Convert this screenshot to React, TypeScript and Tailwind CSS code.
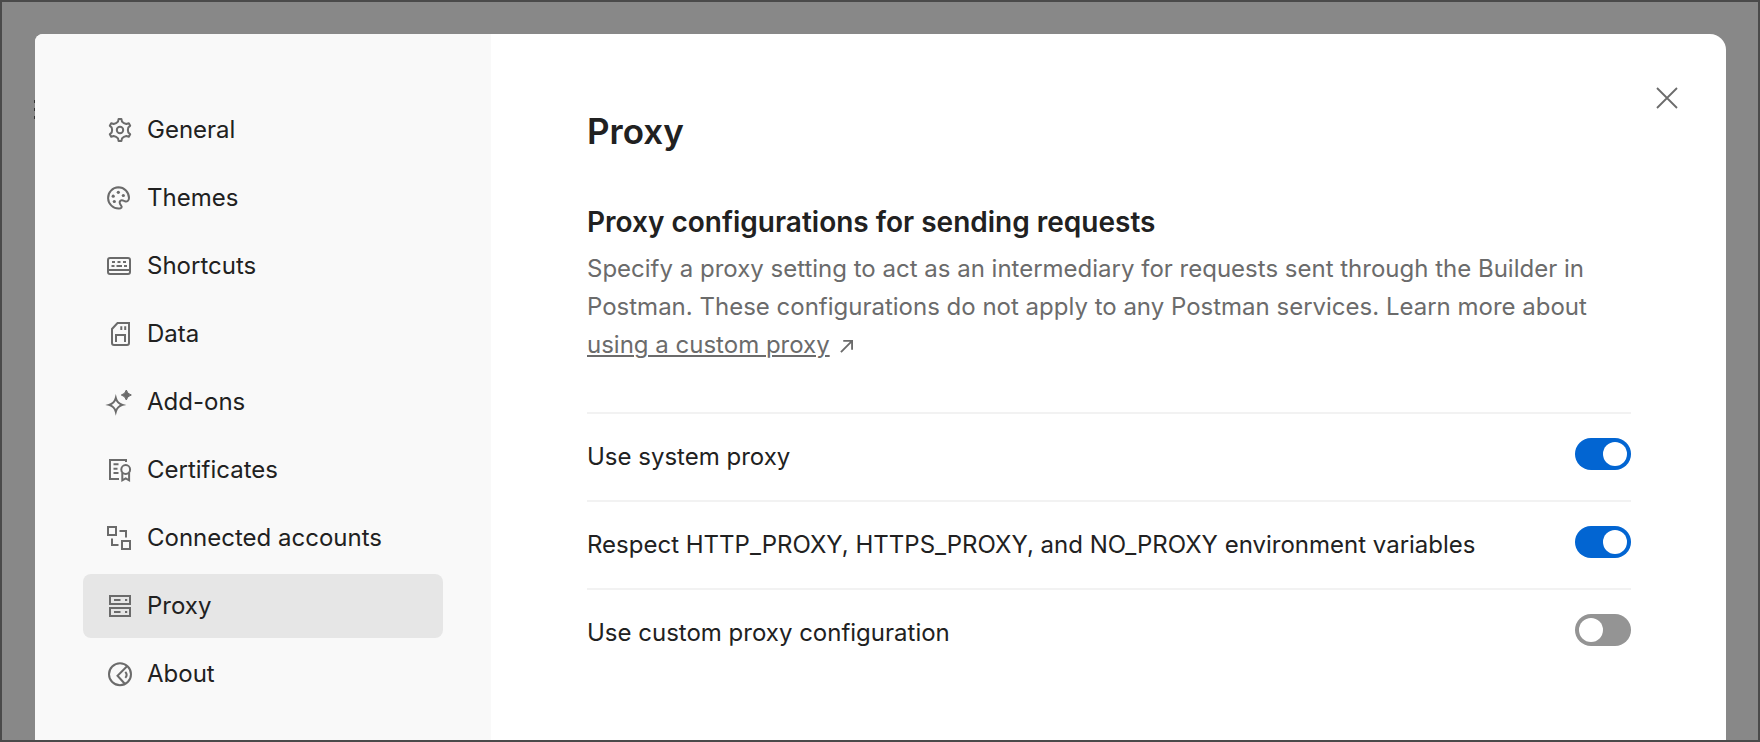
import { useState } from "react";
import type { ReactNode } from "react";

import { clsx } from "clsx";

interface NavItem {
  label: string;
  icon: ReactNode;
}

interface ProxySetting {
  id: string;
  label: string;
  enabled: boolean;
}

const navItems: NavItem[] = [
  {
    label: "General",
    icon: (
      <g transform="translate(13 12)">
        <path
          strokeLinejoin="round"
          d="M-1.4-11H1.4L2-8.4Q3.6-6.6 6.3-6L8.8-6.8L10.2-4.2L8.3-2.4Q7.4 0 8.3 2.4L10.2 4.2L8.8 6.8L6.3 6Q3.6 6.6 2 8.4L1.4 11H-1.4L-2 8.4Q-3.6 6.6-6.3 6L-8.8 6.8L-10.2 4.2L-8.3 2.4Q-7.4 0-8.3-2.4L-10.2-4.2L-8.8-6.8L-6.3-6Q-3.6-6.6-2-8.4Z"
        />
        <circle r="3.2" />
      </g>
    ),
  },
  {
    label: "Themes",
    icon: (
      <>
        <path
          strokeLinejoin="round"
          d="M11.4 1.3a10.6 10.6 0 1 0 .6 21.2c2.4-.1 3.3-1.5 2.3-2.6c-1.6-2-2.2-3.9-.9-5.1c1.4-1.3 2.9-.2 4.5.4c2 .8 4.1-.4 4.1-3.1C22 6.2 17.3 1.3 11.4 1.3z"
        />
        <g fill="currentColor" stroke="none">
          <circle cx="6.2" cy="10.2" r="1.6" />
          <circle cx="11.3" cy="6.3" r="1.6" />
          <circle cx="16.3" cy="9.5" r="1.6" />
          <circle cx="7.3" cy="15.5" r="1.6" />
        </g>
      </>
    ),
  },
  {
    label: "Shortcuts",
    icon: (
      <>
        <rect x="1" y="4" width="22" height="16" rx="2" />
        <path d="M1 16h22M5 8h3M10.5 8h3M16 8h3M4.5 12h3M9.5 12h5.5M17 12h3" />
      </>
    ),
  },
  {
    label: "Data",
    icon: (
      <>
        <path d="M10.5 1H22V21a2 2 0 0 1-2 2H7a2 2 0 0 1-2-2V7z" />
        <path d="M9 20v-7h9V20M14.3 4.3V8M18.2 4.3V8" />
      </>
    ),
  },
  {
    label: "Add-ons",
    icon: (
      <>
        <path d="M8.8 8Q10.2 13.4 15.6 14.9Q10.2 16.4 8.8 21.8Q7.4 16.4 2 14.9Q7.4 13.4 8.8 8z" />
        <path
          d="M19.3 0Q20.3 4 24.3 5Q20.3 6 19.3 10Q18.3 6 14.3 5Q18.3 4 19.3 0z"
          fill="currentColor"
          strokeWidth="1"
          strokeLinejoin="round"
        />
      </>
    ),
  },
  {
    label: "Certificates",
    icon: (
      <>
        <path d="M19 4V2H3v19H12M6.5 6.3h5M6.5 10.7h4M6.5 15h5" />
        <circle cx="18.7" cy="11.5" r="4.4" />
        <path d="M15.3 15v7.3l3.4-2l3.4 2V15" />
      </>
    ),
  },
  {
    label: "Connected accounts",
    icon: (
      <>
        <rect x="1" y="1" width="8" height="8" />
        <rect x="15" y="15" width="8" height="8" />
        <path d="M12.5 5H19v6.5M5 12.5V19h6.5" />
      </>
    ),
  },
  {
    label: "Proxy",
    icon: (
      <>
        <rect x="3" y="2" width="20" height="8" />
        <rect x="3" y="14" width="20" height="8" />
        <path d="M7 6h6.5M18 6h2.2M7 18h6.5M18 18h2.2" />
      </>
    ),
  },
  {
    label: "About",
    icon: (
      <>
        <circle cx="13" cy="12.3" r="11" />
        <path d="M20.3 4L10.5 13.7L18 22M18.3 9.8Q21 12.8 18.3 15.8" />
      </>
    ),
  },
];

const initialSettings: ProxySetting[] = [
  { id: "system-proxy", label: "Use system proxy", enabled: true },
  {
    id: "env-proxy",
    label:
      "Respect HTTP_PROXY, HTTPS_PROXY, and NO_PROXY environment variables",
    enabled: true,
  },
  {
    id: "custom-proxy",
    label: "Use custom proxy configuration",
    enabled: false,
  },
];

function Sidebar({
  active,
  onSelect,
}: {
  active: string;
  onSelect: (label: string) => void;
}) {
  return (
    <nav className="flex w-[456px] shrink-0 flex-col gap-1 bg-[#f9f9f9] px-12 pt-16">
      {navItems.map((item) => (
        <button
          key={item.label}
          type="button"
          onClick={() => onSelect(item.label)}
          className={clsx(
            "flex h-16 items-center gap-4 rounded-lg px-6 text-left",
            active === item.label && "bg-[#e6e6e6]",
          )}
        >
          <svg
            viewBox="0 0 24 24"
            className="size-6 shrink-0 overflow-visible text-[#6b6b6b]"
            fill="none"
            stroke="currentColor"
            strokeWidth="2"
            aria-hidden="true"
          >
            {item.icon}
          </svg>
          {item.label}
        </button>
      ))}
    </nav>
  );
}

function SettingRow({
  setting,
  onToggle,
}: {
  setting: ProxySetting;
  onToggle: () => void;
}) {
  return (
    <div className="flex items-start justify-between gap-6 border-t-2 border-[#f2f2f2] py-6">
      <label htmlFor={setting.id} className="leading-[38px]">
        {setting.label}
      </label>
      <input
        id={setting.id}
        type="checkbox"
        role="switch"
        checked={setting.enabled}
        onChange={onToggle}
        className="flex h-8 w-14 shrink-0 appearance-none items-center rounded-full bg-[#949494] px-1 before:size-6 before:rounded-full before:bg-white checked:justify-end checked:bg-[#0265d2]"
      />
    </div>
  );
}

export default function App() {
  const [active, setActive] = useState("Proxy");
  const [settings, setSettings] = useState(initialSettings);

  const toggleSetting = (id: string) => {
    setSettings((current) =>
      current.map((s) => (s.id === id ? { ...s, enabled: !s.enabled } : s)),
    );
  };

  return (
    <div className="relative flex min-h-screen border-2 border-[#4a4a4a] bg-[#888888] pt-8 pr-8 pl-[33px] font-['Inter',sans-serif] text-2xl text-[#212121]">
      {/* Edge of the menu icon under the dialog */}
      <div
        className="absolute top-[98px] left-8 flex flex-col gap-[5px]"
        aria-hidden="true"
      >
        <span className="h-[3px] w-1 bg-[#333333]" />
        <span className="h-[3px] w-1 bg-[#333333]" />
        <span className="h-[3px] w-1 bg-[#333333]" />
      </div>

      <div
        role="dialog"
        aria-label="Settings"
        className="relative flex flex-1 overflow-hidden rounded-tl-lg rounded-tr-2xl bg-white"
      >
        <Sidebar active={active} onSelect={setActive} />

        <main className="flex flex-1 items-start gap-5 pr-[43px] pl-24">
          <div className="flex-1 pt-[76px]">
            <h1 className="text-[35px] leading-[42px] font-semibold">Proxy</h1>

            <h2 className="mt-[50px] text-[28px] leading-10 font-semibold">
              Proxy configurations for sending requests
            </h2>
            <p className="mt-2 leading-[38px] text-[#6b6b6b]">
              Specify a proxy setting to act as an intermediary for requests
              sent through the Builder in Postman. These configurations do not
              apply to any Postman services. Learn more about{" "}
              <a
                href="#custom-proxy"
                className="underline decoration-2 underline-offset-2"
              >
                using a custom proxy
              </a>
              <svg
                viewBox="0 0 14 14"
                className="ml-2.5 inline size-[13px] align-baseline"
                fill="none"
                stroke="currentColor"
                strokeWidth="2"
                aria-hidden="true"
              >
                <path d="M1 13L12.5 1.5M3.5 1H13V10.5" />
              </svg>
            </p>

            <div className="mt-12">
              {settings.map((setting) => (
                <SettingRow
                  key={setting.id}
                  setting={setting}
                  onToggle={() => toggleSetting(setting.id)}
                />
              ))}
            </div>
          </div>

          <button
            type="button"
            aria-label="Close"
            className="mt-12 flex size-8 items-center justify-center text-[#6b6b6b]"
          >
            <svg
              viewBox="0 0 22 22"
              className="size-[22px]"
              fill="none"
              stroke="currentColor"
              strokeWidth="1.8"
              aria-hidden="true"
            >
              <path d="M1 1L21 21M21 1L1 21" />
            </svg>
          </button>
        </main>
      </div>
    </div>
  );
}
